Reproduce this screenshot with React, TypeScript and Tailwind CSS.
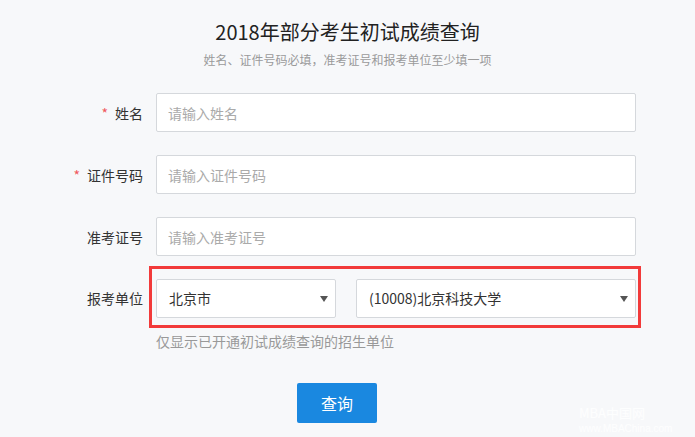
import React from "react";

const Arrow = () => (
  <svg width="8" height="6" viewBox="0 0 8 6" className="shrink-0">
    <path d="M0 0 H8 L4 6 Z" fill="#555" />
  </svg>
);

const Field = ({ label, placeholder, required }: { label: string; placeholder: string; required?: boolean }) => (
  <div className="flex items-center mb-[23px]">
    <label className="w-[143px] text-right text-[14px] text-[#333] leading-[20px]">
      {required && <span className="text-[#f0595d] mr-[7px]">*</span>}
      {label}
    </label>
    <input
      className="ml-[13px] w-[480px] h-[39px] bg-white border border-[#d5d8dc] rounded-[2px] px-[11px] text-[14px] text-[#333] placeholder:text-[#aaa] outline-none"
      placeholder={placeholder}
    />
  </div>
);

export default function App() {
  return (
    <div
      className="relative w-full h-[437px] bg-[#f7f8fa] overflow-hidden"
      style={{ fontFamily: '"Noto Sans CJK SC", "Noto Sans", sans-serif' }}
    >
      <div className="pt-[18px] text-center">
        <h1 className="text-[20px] leading-[28px] text-[#222]">2018年部分考生初试成绩查询</h1>
        <p className="mt-[5px] text-[12px] leading-[18px] text-[#9a9a9a]">
          姓名、证件号码必填，准考证号和报考单位至少填一项
        </p>
      </div>

      <form className="mt-[24px]">
        <Field label="姓名" placeholder="请输入姓名" required />
        <Field label="证件号码" placeholder="请输入证件号码" required />
        <Field label="准考证号" placeholder="请输入准考证号" />

        {/* 报考单位 */}
        <div className="flex items-center -mt-[13px]">
          <label className="w-[143px] text-right text-[14px] text-[#333] leading-[20px] mt-[2px]">报考单位</label>
          <div className="ml-[6px] w-[492px] border-[3px] border-[#f23a3a] pl-[4px] pt-[10px] pb-[7px] flex gap-[20px]">
            <div className="w-[180px] h-[39px] bg-white border border-[#d5d8dc] rounded-[2px] flex items-center justify-between pl-[12px] pr-[7px] text-[14px] text-[#333]">
              <span>北京市</span>
              <Arrow />
            </div>
            <div className="w-[280px] h-[39px] bg-white border border-[#d5d8dc] rounded-[2px] flex items-center justify-between pl-[12px] pr-[7px] text-[14px] text-[#333]">
              <span>(10008)北京科技大学</span>
              <Arrow />
            </div>
          </div>
        </div>
        <p className="ml-[156px] mt-[3px] text-[14px] leading-[20px] text-[#999]">仅显示已开通初试成绩查询的招生单位</p>

        <button
          type="button"
          className="ml-[297px] mt-[32px] w-[80px] h-[40px] bg-[#1a88e0] rounded-[2px] text-white text-[16px]"
        >
          查询
        </button>
      </form>

      <div className="absolute left-[579px] top-[405px] text-white/80">
        <div className="text-[13px] leading-[15px]">MBA中国网</div>
        <div className="mt-[3px] text-[10px] leading-[11px] font-['Liberation_Sans',sans-serif]">www.MBAChina.com</div>
      </div>
    </div>
  );
}
